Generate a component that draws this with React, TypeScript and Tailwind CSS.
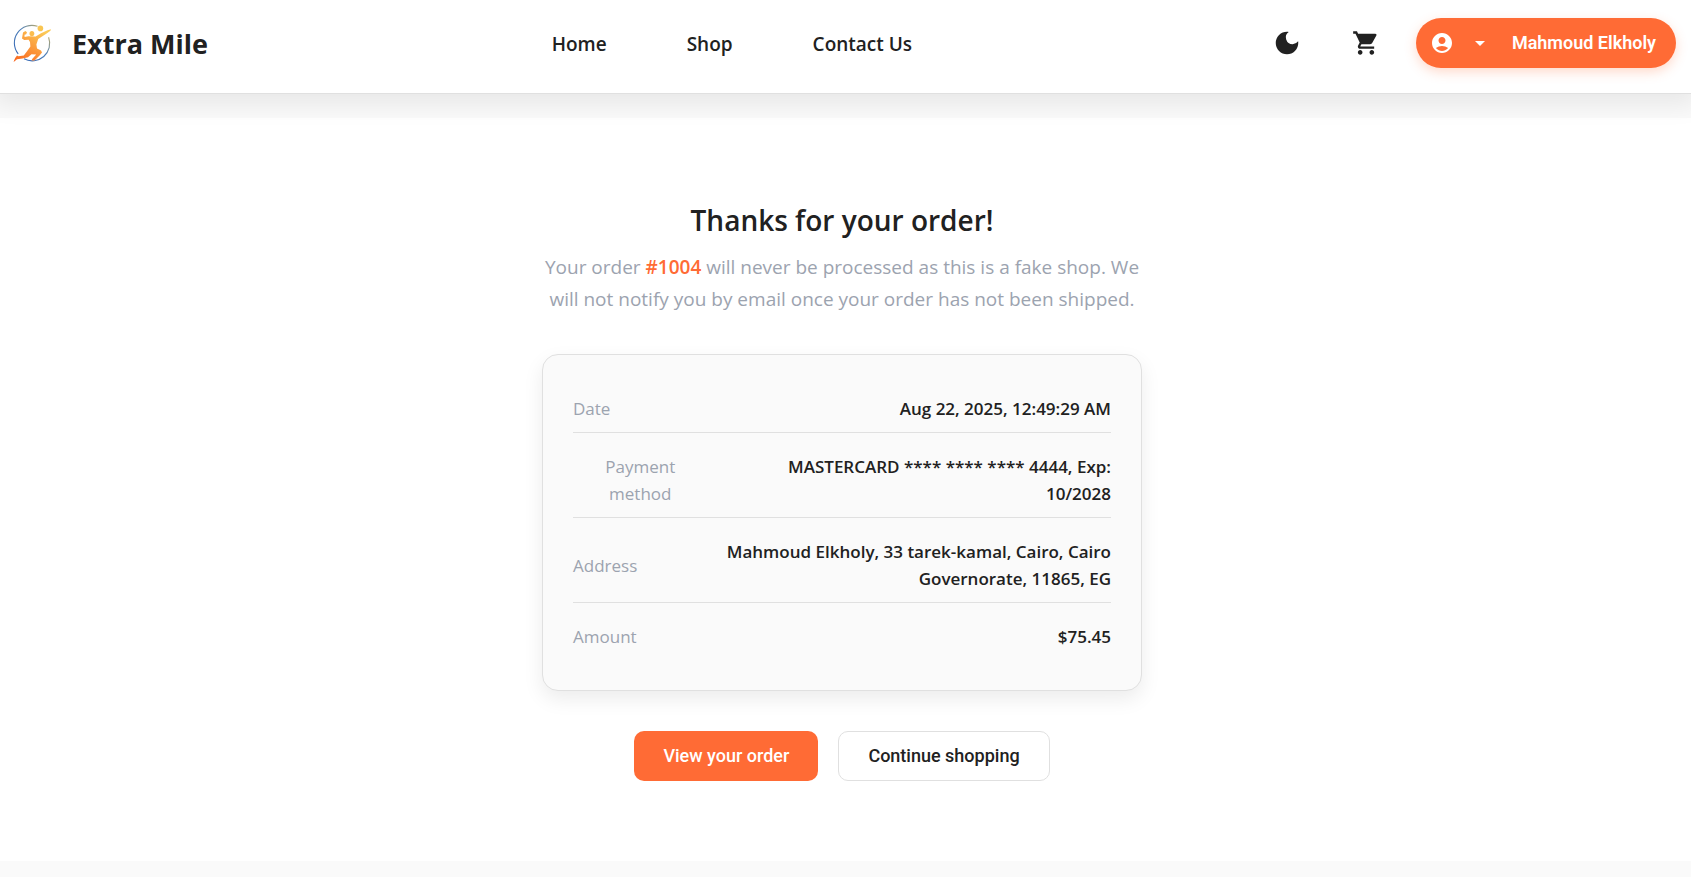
import type { ReactNode } from "react";
import {
  MdAccountCircle,
  MdArrowDropDown,
  MdDarkMode,
  MdShoppingCart,
} from "react-icons/md";

function Logo() {
  return (
    <svg viewBox="8 19 50 50" className="size-[50px] shrink-0" aria-hidden="true">
      <defs>
        <linearGradient id="ring" x1="0" y1="1" x2="1" y2="0">
          <stop offset="0" stopColor="#2f62b5" />
          <stop offset="0.55" stopColor="#4f80b8" />
          <stop offset="1" stopColor="#f2c14a" />
        </linearGradient>
        <linearGradient id="player" x1="0" y1="1" x2="0.7" y2="0">
          <stop offset="0" stopColor="#f8641f" />
          <stop offset="0.45" stopColor="#fb9236" />
          <stop offset="1" stopColor="#fbc957" />
        </linearGradient>
      </defs>
      <path
        d="M18.2 53.8A17.5 17.5 0 0 1 37.5 26.3M48.6 37.2A17.5 17.5 0 0 1 24 58.8"
        fill="none"
        stroke="url(#ring)"
        strokeWidth="1.1"
      />
      <circle cx="40.4" cy="28.4" r="2.8" fill="#f9c653" />
      <ellipse cx="31.9" cy="33.6" rx="2.4" ry="2.6" fill="#fbbd4e" />
      <path
        d="M23 32.4L25.4 31L27 32.2L26.2 34.2L24.5 34.8L24.6 37L28.4 36.3L35.6 36.4L41 33.2L47.5 30.2L51 29.2L50.4 30.8L47 33.2L38.2 39L36.4 44.5L37 48.4L41 50.4L42 52.4L39.6 55.6L34.5 60.6L31.6 60.6L32.2 59L36.2 54.6L31.5 54.2L28 57.2L22.6 58.6L17 59.2L14 61.7L13.6 61.4L15.2 58L17 55.4L18.4 56.2L23.8 55.4L27.2 51L30.4 46.6L30 42L28.6 39.8L24.2 40L22 38.6Z"
        fill="url(#player)"
      />
    </svg>
  );
}

const navItems = ["Home", "Shop", "Contact Us"];

function Header() {
  return (
    <header className="relative flex h-[94px] items-center justify-between border-b border-[#e0e0e0] bg-white pr-[15px] pl-2 shadow-[0_4px_24px_6px_rgba(0,0,0,0.08)]">
      <a href="#home" className="flex items-center gap-[14px] pb-[6px]">
        <Logo />
        <span className="text-[27px] leading-9 font-bold">Extra Mile</span>
      </a>
      <nav className="flex gap-20 pb-[6px]">
        {navItems.map((item) => (
          <a key={item} href="#" className="text-[19px] leading-7 font-semibold">
            {item}
          </a>
        ))}
      </nav>
      <div className="flex items-center pb-2 pl-4">
        <button type="button" aria-label="Toggle dark mode" className="mr-[50px]">
          <MdDarkMode size={30} />
        </button>
        <button type="button" aria-label="Cart" className="mr-9">
          <MdShoppingCart size={28} />
        </button>
        <button
          type="button"
          className="flex h-[50px] items-center rounded-full bg-[#ff6b35] pr-5 pl-[14px] font-['Roboto',sans-serif] text-[18px] font-semibold text-white shadow-[0_4px_12px_rgba(255,107,53,0.25)]"
        >
          <MdAccountCircle size={24} />
          <MdArrowDropDown size={24} className="mr-5 ml-[14px]" />
          Mahmoud Elkholy
        </button>
      </div>
    </header>
  );
}

type RowProps = { label: string; centered?: boolean; children: ReactNode };

function DetailRow({ label, centered = false, children }: RowProps) {
  return (
    <div className="mt-[10px] flex items-center justify-between border-b border-[#e0e0e0] py-[10px] leading-[27px] first:mt-0 last:border-b-0">
      <dt className={centered ? "w-1/4 px-7 text-center text-[#9ca3af]" : "text-[#9ca3af]"}>
        {label}
      </dt>
      <dd className="max-w-[390px] text-right font-semibold">{children}</dd>
    </div>
  );
}

export default function App() {
  return (
    <div className="min-h-screen bg-[#fafafa] font-['Open_Sans','Noto_Sans',sans-serif] text-[#212121]">
      <Header />
      <main className="mt-6 bg-white pt-[82px] pr-[7px] pb-20">
        <section className="mx-auto flex max-w-[600px] flex-col">
          <h1 className="text-center text-[28px] leading-10 font-semibold">
            Thanks for your order!
          </h1>
          <p className="mt-[11px] text-center text-[19px] leading-8 text-[#9ca3af]">
            Your order{" "}
            <a href="#order" className="font-semibold text-[#ff6b35]">
              #1004
            </a>{" "}
            will never be processed as this is a fake shop. We will not notify you by email once
            your order has not been shipped.
          </p>
          <dl className="mt-[39px] rounded-2xl border border-[#e0e0e0] bg-[#fafafa] p-[30px] text-[17px] shadow-[0_8px_20px_rgba(0,0,0,0.08)]">
            <DetailRow label="Date">Aug 22, 2025, 12:49:29 AM</DetailRow>
            <DetailRow label="Payment method" centered>
              MASTERCARD **** **** **** 4444, Exp: 10/2028
            </DetailRow>
            <DetailRow label="Address">
              Mahmoud Elkholy, 33 tarek-kamal, Cairo, Cairo Governorate, 11865, EG
            </DetailRow>
            <DetailRow label="Amount">$75.45</DetailRow>
          </dl>
          <div className="mt-10 flex justify-center gap-5 font-['Roboto',sans-serif] text-[18px] font-medium">
            <button type="button" className="h-[50px] rounded-[10px] bg-[#ff6b35] px-[29px] pb-0.5 text-white">
              View your order
            </button>
            <button type="button" className="h-[50px] rounded-[10px] border border-[#e0e0e0] bg-white px-[29px] pb-0.5">
              Continue shopping
            </button>
          </div>
        </section>
      </main>
    </div>
  );
}
